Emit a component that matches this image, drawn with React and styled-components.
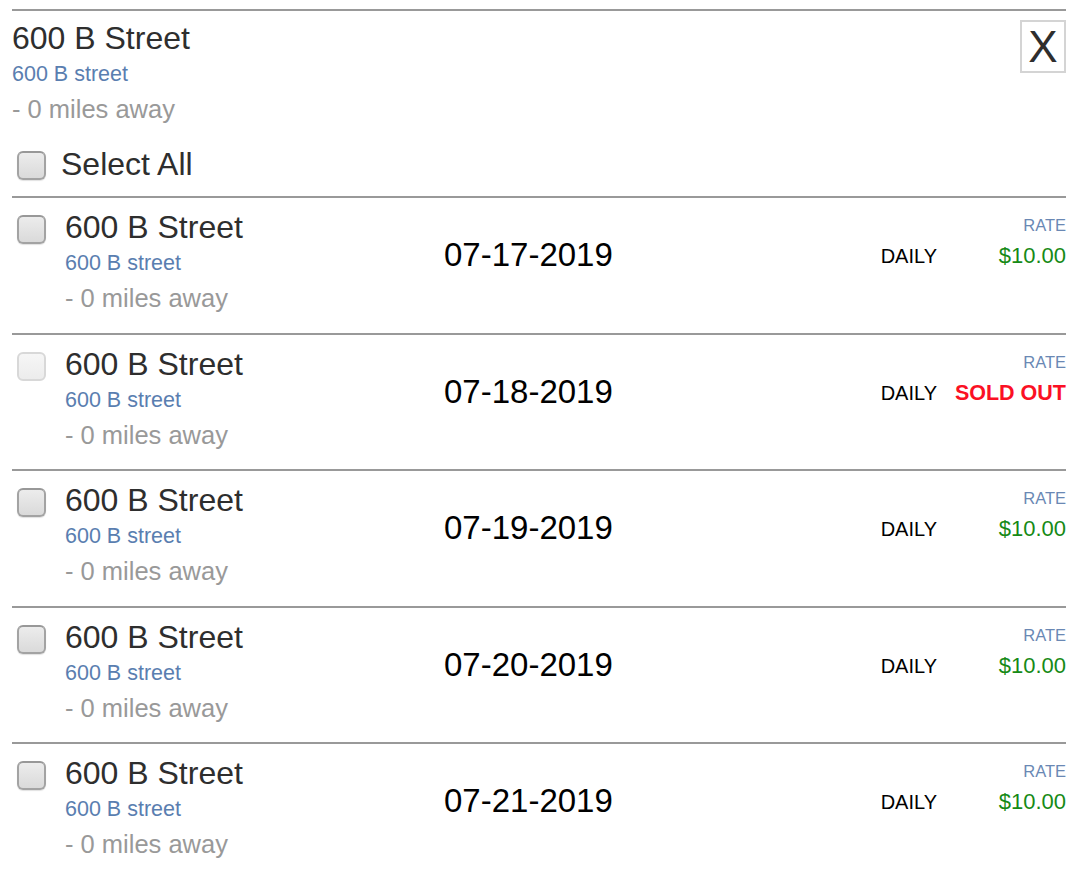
import styled, { createGlobalStyle } from "styled-components";

const GlobalStyle = createGlobalStyle`
  body {
    margin: 0;
    background: #fff;
    font-family: "Liberation Sans", Arial, Helvetica, sans-serif;
  }
`;

const rows = [
  { date: "07-17-2019", price: "$10.00" },
  { date: "07-18-2019", soldOut: true },
  { date: "07-19-2019", price: "$10.00" },
  { date: "07-20-2019", price: "$10.00" },
  { date: "07-21-2019", price: "$10.00" },
];

export default function App() {
  return (
    <>
      <GlobalStyle />
      <Panel>
        <Header>
          <div>
            <Title>600 B Street</Title>
            <Address>600 B street</Address>
            <Distance>- 0 miles away</Distance>
          </div>
          <CloseButton type="button">X</CloseButton>
        </Header>
        <SelectAllRow>
          <Check type="checkbox" $top={5} />
          <SelectLabel>Select All</SelectLabel>
        </SelectAllRow>
        {rows.map((row) => (
          <Row key={row.date}>
            <Check type="checkbox" $top={6} disabled={row.soldOut} />
            <Info>
              <Title>600 B Street</Title>
              <Address>600 B street</Address>
              <Distance>- 0 miles away</Distance>
            </Info>
            <DateText>{row.date}</DateText>
            <RateBlock>
              <RateLabel>RATE</RateLabel>
              <PriceRow>
                <Period>DAILY</Period>
                <Price $soldOut={row.soldOut}>
                  {row.soldOut ? "SOLD OUT" : row.price}
                </Price>
              </PriceRow>
            </RateBlock>
          </Row>
        ))}
      </Panel>
    </>
  );
}

const Panel = styled.div`
  margin: 9px 8px 0 12px;
  border-top: 2px solid #999;
`;

const Header = styled.div`
  display: flex;
  justify-content: space-between;
  align-items: flex-start;
  padding-top: 9px;
`;

const Title = styled.div`
  font-size: 32px;
  line-height: 36px;
  color: #2e2e2e;
`;

const Address = styled.div`
  margin-top: 5px;
  font-size: 21.5px;
  line-height: 26px;
  color: #5a7eb0;
`;

const Distance = styled.div`
  margin-top: 7px;
  font-size: 25.5px;
  line-height: 30px;
  color: #999;
`;

const CloseButton = styled.button`
  width: 46px;
  height: 53px;
  padding: 0;
  border: 2px solid #d4d4d4;
  background: #fff;
  color: #2e2e2e;
  font-family: inherit;
  font-size: 44px;
  line-height: 49px;
  text-align: center;
  cursor: pointer;
`;

const SelectAllRow = styled.div`
  display: flex;
  align-items: flex-start;
  gap: 15px;
  margin-top: 22px;
  padding: 0 0 14px 5px;
  border-bottom: 2px solid #999;
`;

const SelectLabel = styled.span`
  font-size: 32px;
  line-height: 36px;
  color: #2e2e2e;
`;

const Check = styled.input`
  appearance: none;
  flex: none;
  width: 29px;
  height: 29px;
  margin: ${(p) => p.$top}px 0 0;
  border: 2px solid #a3a3a3;
  border-top-color: #989898;
  border-radius: 6px;
  background: linear-gradient(#ececec, #dadada);
  box-shadow: 0 1px 1px rgba(0, 0, 0, 0.12);

  &:disabled {
    border-color: #d8d8d8;
    background: linear-gradient(#f6f6f6, #ececec);
    box-shadow: none;
  }
`;

const Row = styled.div`
  display: flex;
  align-items: flex-start;
  padding: 11px 0 19.5px 5px;
  border-bottom: 2px solid #999;

  &:last-child {
    border-bottom: none;
  }
`;

const Info = styled.div`
  width: 379px;
  margin-left: 19px;
`;

const DateText = styled.div`
  flex: 1;
  margin-top: 28px;
  font-size: 33px;
  line-height: 36px;
  color: #000;
`;

const RateBlock = styled.div`
  display: flex;
  flex-direction: column;
  align-items: flex-end;
  margin-top: 6px;
`;

const RateLabel = styled.div`
  font-size: 16.5px;
  line-height: 20px;
  color: #6a88b4;
`;

const PriceRow = styled.div`
  display: flex;
  align-items: baseline;
  gap: 17px;
  margin-top: 8px;
  line-height: 26px;
`;

const Period = styled.span`
  font-size: 20px;
  color: #000;
`;

const Price = styled.span`
  min-width: 112px;
  text-align: right;
  font-size: ${(p) => (p.$soldOut ? "21.5px" : "22px")};
  font-weight: ${(p) => (p.$soldOut ? 700 : 400)};
  color: ${(p) => (p.$soldOut ? "#fb1024" : "#168a16")};
`;
